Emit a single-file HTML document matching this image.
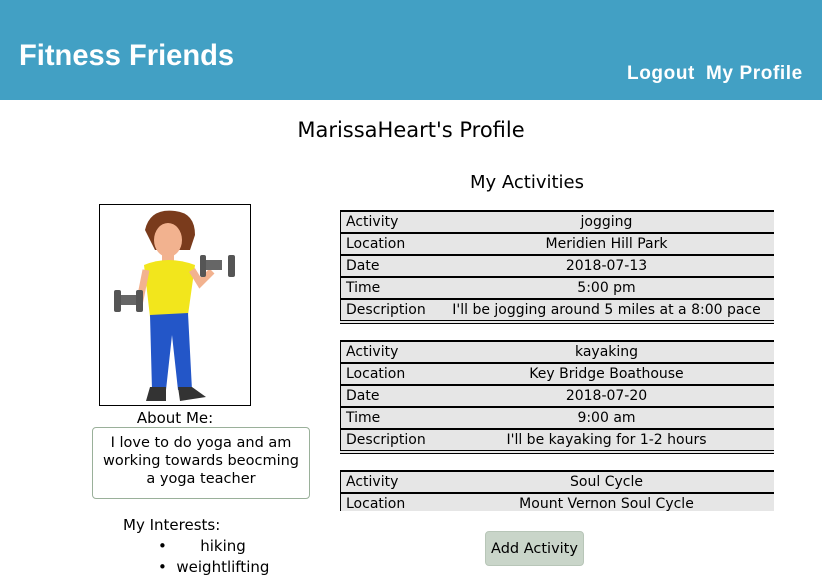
<!DOCTYPE html>
<html><head><style>
body{margin:0;width:822px;height:585px;overflow:hidden;background:#fff;font-family:"DejaVu Sans","Liberation Sans",sans-serif;color:#000;position:relative}
.hdr{position:absolute;left:0;top:0;width:822px;height:100px;background:#42a0c4}
.brand{position:absolute;left:19px;top:39px;color:#fff;font:bold 30px "Liberation Sans",sans-serif;transform:scaleX(0.97);transform-origin:left}
.nav{position:absolute;top:63px;color:#fff;font:bold 19px "Liberation Sans",sans-serif;letter-spacing:.6px}
.t{position:absolute;white-space:nowrap}
.scroll{position:absolute;left:340px;top:210px;width:434px;height:301px;overflow:hidden}
table{border-collapse:collapse;width:436px;background:#e6e6e6;font-size:14px;border-bottom:4px double #000;margin-bottom:16px}
td{border:2px solid #000;border-left:1px solid #000;height:19px;padding:1px 5px 0;line-height:19px}
td:first-child{width:88px;border-right:none}
td:last-child{text-align:center;border-left:none}
</style></head><body>
<div class="hdr"></div>
<div class="brand">Fitness Friends</div>
<div class="nav" style="left:627px">Logout</div>
<div class="nav" style="left:706px">My Profile</div>
<div class="t" style="left:0;width:822px;text-align:center;top:118px;font-size:21px">MarissaHeart's Profile</div>
<div class="t" style="left:340px;width:374px;text-align:center;top:172px;font-size:18px">My Activities</div>
<div style="position:absolute;left:99px;top:204px;width:150px;height:200px;border:1px solid #000">
<svg width="150" height="200" viewBox="0 0 150 200">
<path d="M45 25 Q50 3 75 6 Q95 8 95 30 L90 45 L55 45 Z" fill="#7a3b1c"/>
<ellipse cx="68" cy="35" rx="14" ry="17" fill="#f2b28f"/>
<rect x="62" y="48" width="12" height="10" fill="#f2b28f"/>
<path d="M44 60 Q68 50 95 60 L88 110 L50 112 Z" fill="#f2e61c"/>
<path d="M50 110 L88 108 L92 185 L78 185 L72 130 L66 185 L52 185 Z" fill="#2356c8"/>
<path d="M92 65 L100 78 L112 66" stroke="#f2b28f" stroke-width="7" fill="none"/>
<path d="M46 65 L40 95 L30 96" stroke="#f2b28f" stroke-width="7" fill="none"/>
<rect x="100" y="55" width="22" height="10" fill="#666"/><rect x="100" y="50" width="6" height="22" rx="2" fill="#555"/><rect x="128" y="50" width="7" height="22" rx="2" fill="#555"/>
<rect x="16" y="90" width="26" height="10" fill="#666"/><rect x="14" y="85" width="7" height="22" rx="2" fill="#555"/><rect x="36" y="85" width="7" height="22" rx="2" fill="#555"/>
<path d="M50 182 L66 182 L66 196 L46 196 Z M78 182 L92 182 L106 192 L80 196 Z" fill="#333"/>
</svg></div>
<div class="t" style="left:99px;width:152px;text-align:center;top:409px;font-size:15px">About Me:</div>
<div style="position:absolute;left:92px;top:427px;width:218px;height:72px;border:1px solid #9ab09a;border-radius:4px;text-align:center;font-size:14.5px;line-height:18px;padding-top:6px;box-sizing:border-box">I love to do yoga and am<br>working towards beocming<br>a yoga teacher</div>
<div class="t" style="left:123px;top:516px;font-size:15px">My Interests:</div>
<div class="t" style="left:158px;top:537px;font-size:15px">•&nbsp;&nbsp;&nbsp;&nbsp;&nbsp;&nbsp;&nbsp;hiking</div>
<div class="t" style="left:158px;top:558px;font-size:15px">•&nbsp;&nbsp;weightlifting</div>
<div class="scroll">
<table><tr><td>Activity</td><td>jogging</td></tr><tr><td>Location</td><td>Meridien Hill Park</td></tr><tr><td>Date</td><td>2018-07-13</td></tr><tr><td>Time</td><td>5:00 pm</td></tr><tr><td>Description</td><td>I'll be jogging around 5 miles at a 8:00 pace</td></tr></table>
<table><tr><td>Activity</td><td>kayaking</td></tr><tr><td>Location</td><td>Key Bridge Boathouse</td></tr><tr><td>Date</td><td>2018-07-20</td></tr><tr><td>Time</td><td>9:00 am</td></tr><tr><td>Description</td><td>I'll be kayaking for 1-2 hours</td></tr></table>
<table><tr><td>Activity</td><td>Soul Cycle</td></tr><tr><td>Location</td><td>Mount Vernon Soul Cycle</td></tr><tr><td>Date</td><td>2018-07-27</td></tr></table>
</div>
<div style="position:absolute;left:485px;top:531px;width:99px;height:35px;background:#c9d5c9;border:1px solid #b8c6b8;border-radius:4px;box-sizing:border-box;text-align:center;line-height:34px;font-size:14.5px">Add Activity</div>
</body></html>
